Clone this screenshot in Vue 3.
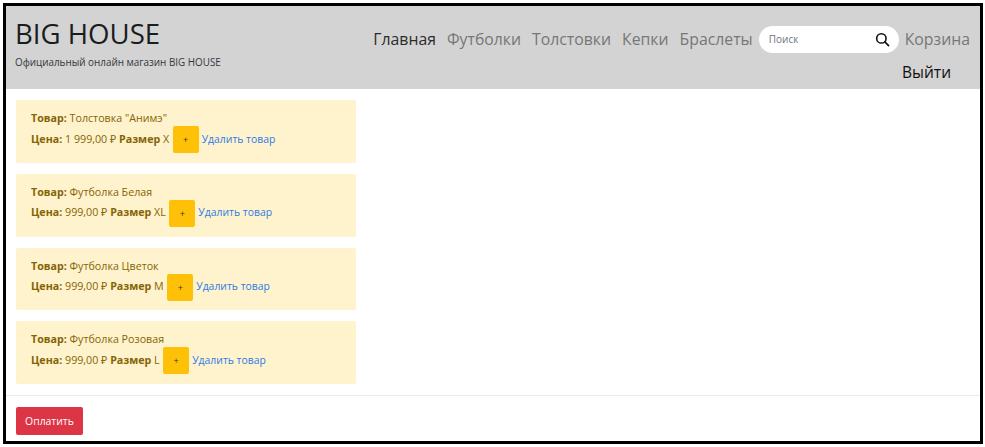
<script setup>
const links = [
  { label: 'Главная', active: true },
  { label: 'Футболки' },
  { label: 'Толстовки' },
  { label: 'Кепки' },
  { label: 'Браслеты' }
]

const items = [
  { name: 'Толстовка "Анимэ"', price: '1 999,00 ₽', size: 'X' },
  { name: 'Футболка Белая', price: '999,00 ₽', size: 'XL' },
  { name: 'Футболка Цветок', price: '999,00 ₽', size: 'M' },
  { name: 'Футболка Розовая', price: '999,00 ₽', size: 'L' }
]
</script>

<template>
<div class="frame">
  <header class="header">
    <div class="brand">
      <h1>BIG HOUSE</h1>
      <p>Официальный онлайн магазин BIG HOUSE</p>
    </div>
    <div class="right">
      <nav class="nav">
        <a v-for="link in links" :key="link.label" :class="{ active: link.active }">{{ link.label }}</a>
        <div class="search">
          <span>Поиск</span>
          <svg width="15" height="15" viewBox="0 0 16 16" fill="none" stroke="#111" stroke-width="1.7">
            <circle cx="6.8" cy="6.8" r="5" />
            <path d="M10.5 10.5 L14.5 14.5" stroke-linecap="round" />
          </svg>
        </div>
        <a>Корзина</a>
      </nav>
      <a class="logout">Выйти</a>
    </div>
  </header>

  <main class="list">
    <div v-for="item in items" :key="item.name" class="card">
      <div class="line"><b>Товар:</b> {{ item.name }}</div>
      <div class="line row">
        <span class="info"><b>Цена:</b> {{ item.price }} <b>Размер</b> {{ item.size }}</span>
        <button class="plus">+</button>
        <a class="remove">Удалить товар</a>
      </div>
    </div>
  </main>

  <footer class="footer">
    <button class="pay">Оплатить</button>
  </footer>
</div>
</template>

<style>
html, body {
  margin: 0;
  background: #fff;
}
</style>

<style scoped>
.frame {
  box-sizing: border-box;
  width: 980px;
  height: 441px;
  margin: 3px 0 0 3px;
  border: 3px solid #000;
  font-family: "Open Sans", "Noto Sans", sans-serif;
  overflow: hidden;
}
.header {
  display: flex;
  justify-content: space-between;
  height: 83px;
  padding: 0 10px 0 9px;
  background: #d3d3d3;
  box-sizing: border-box;
}
.brand h1 {
  margin: 9px 0 0;
  font-size: 27.6px;
  font-weight: 500;
  line-height: 36px;
  color: #1a1d20;
}
.brand p {
  margin: 3px 0 0;
  font-size: 9.9px;
  line-height: 16px;
  color: #33373b;
}
.right {
  display: flex;
  flex-direction: column;
  align-items: flex-end;
}
.nav {
  display: flex;
  align-items: center;
  gap: 11px;
  margin-top: 19px;
  height: 28px;
  font-size: 15.8px;
  line-height: 26px;
  color: #777;
}
.nav a {
  margin-top: -1px;
}
.nav a.active {
  color: #2b2b2b;
}
.search {
  display: flex;
  align-items: center;
  justify-content: space-between;
  width: 140px;
  height: 27px;
  box-sizing: border-box;
  margin-left: -5px;
  margin-right: -5px;
  padding: 0 9px 0 10px;
  background: #fff;
  border-radius: 14px;
  font-size: 10px;
  line-height: 14px;
  color: #6c757d;
}
.logout {
  margin: 7px 19px 0 0;
  font-size: 15.5px;
  line-height: 24px;
  color: #111;
}
.list {
  padding: 11.3px 10px 0;
  height: 307px;
  box-sizing: border-box;
  border-bottom: 1px solid #e9e9e9;
}
.card {
  box-sizing: border-box;
  width: 340px;
  height: 62.7px;
  margin-bottom: 11px;
  padding: 10px 15px 0;
  background: #fff3cd;
  border-radius: 2px;
  color: #856404;
  font-size: 10.7px;
}
.line {
  line-height: 16px;
}
.row {
  display: flex;
  align-items: center;
  height: 27px;
  white-space: pre-wrap;
}
.info {
  margin-top: -2px;
}
.plus {
  width: 26px;
  height: 27px;
  margin-left: 3.5px;
  padding: 0;
  border: 0;
  border-radius: 2px;
  background: #ffc107;
  color: #333;
  font-family: inherit;
  font-size: 9px;
}
.remove {
  margin-left: 3px;
  margin-top: -2px;
  font-size: 10.4px;
  color: #2c7be5;
}
.footer {
  padding: 11px 10px 0;
}
.pay {
  display: block;
  width: 67px;
  height: 28px;
  padding: 0;
  border: 0;
  border-radius: 2px;
  background: #dc3545;
  color: #fff;
  font-family: inherit;
  font-size: 10.4px;
}
</style>
